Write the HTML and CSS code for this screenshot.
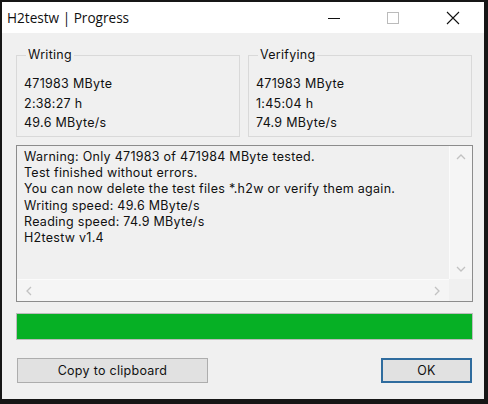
FILE: index.html
```html
<!DOCTYPE html>
<html>
<head>
<meta charset="utf-8">
<link rel="stylesheet" href="styles.css">
</head>
<body>
<div class="window">
  <div class="titlebar">
    <span class="title">H2testw | Progress</span>
    <div class="controls">
      <span class="ctl"><svg width="16" height="16" viewBox="0 0 16 16"><path d="M2 8.5h12" stroke="#111" stroke-width="1"/></svg></span>
      <span class="ctl"><svg width="16" height="16" viewBox="0 0 16 16"><rect x="2.5" y="2.5" width="11" height="11" fill="none" stroke="#bbb" stroke-width="1"/></svg></span>
      <span class="ctl"><svg width="16" height="16" viewBox="0 0 16 16"><path d="M2 2l12 12M14 2L2 14" stroke="#111" stroke-width="1.1"/></svg></span>
    </div>
  </div>
  <div class="content">
    <div class="groups">
      <fieldset class="group">
        <legend>Writing</legend>
        <div class="line">471983 MByte</div>
        <div class="line">2:38:27 h</div>
        <div class="line">49.6 MByte/s</div>
      </fieldset>
      <fieldset class="group">
        <legend>Verifying</legend>
        <div class="line">471983 MByte</div>
        <div class="line">1:45:04 h</div>
        <div class="line">74.9 MByte/s</div>
      </fieldset>
    </div>
    <div class="log">
      <div class="log-main">
        <div class="log-text">
          <div>Warning: Only 471983 of 471984 MByte tested.</div>
          <div>Test finished without errors.</div>
          <div>You can now delete the test files *.h2w or verify them again.</div>
          <div>Writing speed: 49.6 MByte/s</div>
          <div>Reading speed: 74.9 MByte/s</div>
          <div>H2testw v1.4</div>
        </div>
        <div class="vscroll">
          <svg width="10" height="8" viewBox="0 0 10 8"><path d="M1 6l4-4 4 4" fill="none" stroke="#c2c2c2" stroke-width="1.3"/></svg>
          <svg width="10" height="8" viewBox="0 0 10 8"><path d="M1 2l4 4 4-4" fill="none" stroke="#c2c2c2" stroke-width="1.3"/></svg>
        </div>
      </div>
      <div class="hscroll-row">
        <div class="hscroll">
          <svg width="8" height="10" viewBox="0 0 8 10"><path d="M6 1L2 5l4 4" fill="none" stroke="#c2c2c2" stroke-width="1.3"/></svg>
          <svg width="8" height="10" viewBox="0 0 8 10"><path d="M2 1l4 4-4 4" fill="none" stroke="#c2c2c2" stroke-width="1.3"/></svg>
        </div>
        <div class="corner"></div>
      </div>
    </div>
    <div class="progress"><div class="fill"></div></div>
    <div class="buttons">
      <button class="btn copy">Copy to clipboard</button>
      <button class="btn ok">OK</button>
    </div>
  </div>
</div>
</body>
</html>
```
FILE: styles.css
```css
html, body {
  margin: 0;
  padding: 0;
  background: #121212;
}
.window {
  width: 482px;
  height: 397px;
  border-style: solid;
  border-color: #161616;
  border-width: 2px 4px 5px 2px;
  background: #f0f0f0;
  display: flex;
  flex-direction: column;
  font-family: Inter, "Open Sans", sans-serif;
  font-size: 12.5px;
  letter-spacing: 0.28px;
  color: #000;
}
.titlebar {
  height: 31px;
  background: #fff;
  display: flex;
  align-items: center;
  justify-content: space-between;
  padding-left: 5px;
}
.title {
  font-family: "Open Sans", "Noto Sans", sans-serif;
  font-size: 13.6px;
  letter-spacing: 0;
  color: #111;
}
.controls {
  display: flex;
  height: 100%;
}
.ctl {
  display: flex;
  align-items: center;
  justify-content: center;
}
.ctl:nth-child(1) { width: 52px; }
.ctl:nth-child(2) { width: 66px; }
.ctl:nth-child(3) { width: 54px; margin-right: 4px; }
.content {
  flex: 1;
  padding: 15px 11px 0 14px;
  display: flex;
  flex-direction: column;
}
.groups {
  display: grid;
  grid-template-columns: 224px 224px;
  column-gap: 8px;
  padding-right: 1px;
}
.group {
  margin: 0;
  border: 1px solid #d9d9d9;
  padding: 12px 6px 3px 7px;
  height: 89px;
  box-sizing: border-box;
  min-width: 0;
}
.group legend {
  padding: 0 2px;
  margin-left: 2px;
  line-height: 14px;
  color: #111;
}
.line {
  line-height: 19.5px;
  color: #111;
}
.log {
  margin-top: 8px;
  height: 157px;
  border: 1px solid #8c8c8c;
  box-sizing: border-box;
  display: flex;
  flex-direction: column;
}
.log-main {
  flex: 1;
  display: flex;
}
.log-text {
  flex: 1;
  padding: 3px 0 0 7px;
  line-height: 16.2px;
  color: #111;
  background: #f0f0f0;
}
.vscroll {
  width: 22px;
  background: #f5f5f5;
  border-left: 1px solid #fbfbfb;
  display: flex;
  flex-direction: column;
  justify-content: space-between;
  align-items: center;
  padding: 7px 0 6px;
}
.hscroll-row {
  height: 22px;
  display: flex;
}
.hscroll {
  flex: 1;
  background: #f5f5f5;
  border-top: 1px solid #fbfbfb;
  display: flex;
  justify-content: space-between;
  align-items: center;
  padding: 0 8px 0 8px;
}
.corner {
  width: 23px;
  background: #f0f0f0;
}
.progress {
  margin-top: 11px;
  height: 27px;
  border: 1px solid #bcbcbc;
  box-sizing: border-box;
  background: #e6e6e6;
}
.fill {
  height: 100%;
  width: 100%;
  background: #06b025;
}
.buttons {
  margin-top: 18px;
  display: flex;
  justify-content: space-between;
  padding-left: 1px;
  padding-right: 1px;
}
.btn {
  height: 25px;
  box-sizing: border-box;
  font-family: Inter, "Open Sans", sans-serif;
  font-size: 12.5px;
  letter-spacing: 0.28px;
  color: #111;
  background: #e1e1e1;
  padding: 0;
}
.copy {
  width: 191px;
  border: 1px solid #adadad;
}
.ok {
  width: 91px;
  border: 2px solid #2f6c9e;
}
```
